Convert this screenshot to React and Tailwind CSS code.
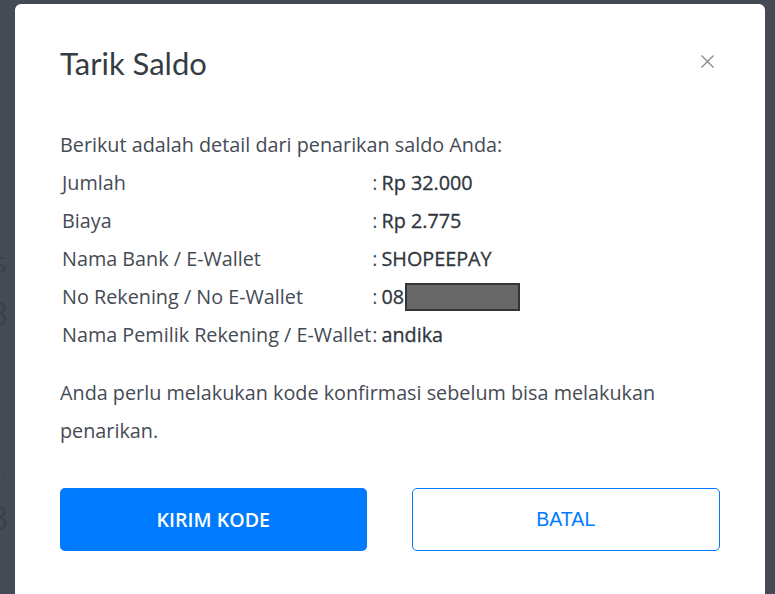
export default function App(){
  const rows=[
    ["Jumlah","Rp 32.000"],
    ["Biaya","Rp 2.775"],
    ["Nama Bank / E-Wallet","SHOPEEPAY"],
    ["No Rekening / No E-Wallet",null],
    ["Nama Pemilik Rekening / E-Wallet","andika"],
  ];
  return (
    <div className="relative h-[594px] w-[775px] overflow-hidden bg-[#454b54] pl-[15px] pr-[10px] pt-[4px] font-['Open_Sans',sans-serif]">
      {/* page behind the overlay */}
      <div className="absolute left-[-6px] top-[248px] text-[22px] text-[#3b4049]">S</div>
      <div className="absolute left-[-10px] top-[290px] text-[32px] text-[#3b4049]">3</div>
      <div className="absolute left-[-14px] top-[458px] text-[18px] text-[#3e4a4a]">o /</div>
      <div className="absolute left-[-10px] top-[494px] text-[32px] text-[#3b4049]">3</div>

      <div className="relative h-[620px] rounded-[6px] bg-white px-[45px] pt-[41px] text-[#454b54]">
        <div className="flex items-start justify-between">
          <h1 className="font-['Lato',sans-serif] text-[31px] leading-[36px] text-[#363b44]">Tarik Saldo</h1>
          <button className="mr-[6px] mt-[10px] block text-[#8a8a8a]">
            <svg className="block" width="13" height="13" viewBox="0 0 13 13" stroke="currentColor" strokeWidth="1.4" fill="none"><path d="M0.5 0.5 12.5 12.5M12.5 0.5 0.5 12.5"/></svg>
          </button>
        </div>

        <div className="mt-[45px] text-[19.8px] leading-[38px]">
          <p>Berikut adalah detail dari penarikan saldo Anda:</p>
          <div className="grid grid-cols-[auto_1fr] pl-[2px]">
            {rows.map(([l,v])=>(
              <div key={l} className="contents">
                <div>{l}</div>
                <div className="flex items-center pl-[1px]">
                  <span className="pr-[4px]">:</span>
                  {v!==null ? <span className="text-[#30353d] [-webkit-text-stroke:0.3px_#30353d]">{v}</span> : (
                    <>
                      <span className="text-[#30353d] [-webkit-text-stroke:0.3px_#30353d]">08</span>
                      <span className="ml-[1px] h-[28px] w-[115px] border-2 border-[#353535] bg-[#686868]"></span>
                    </>
                  )}
                </div>
              </div>
            ))}
          </div>
          <p className="mt-[20px]">Anda perlu melakukan kode konfirmasi sebelum bisa melakukan penarikan.</p>
        </div>

        <div className="mt-[38px] flex gap-[45px]">
          <button className="h-[63px] flex-1 rounded-[5px] bg-[#007bff] text-[19.6px] font-semibold text-white">KIRIM KODE</button>
          <button className="h-[63px] flex-1 rounded-[5px] border border-[#007bff] font-['Liberation_Sans',sans-serif] text-[19.6px] text-[#007bff]">BATAL</button>
        </div>
      </div>
    </div>
  );
}
